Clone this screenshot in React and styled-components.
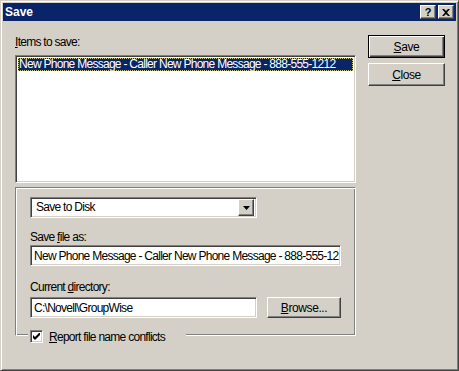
import React from 'react';
import styled, { createGlobalStyle } from 'styled-components';

const Global = createGlobalStyle`
  html, body { margin: 0; padding: 0; background: #d4d0c8; }
  body { font-family: "Liberation Sans", Arial, sans-serif; }
`;

const raised = `
  border: 1px solid;
  border-color: #ffffff #404040 #404040 #ffffff;
  box-shadow: inset -1px -1px #808080;
  background: #d4d0c8;
`;

const sunken = `
  border: 1px solid;
  border-color: #808080 #ffffff #ffffff #808080;
  box-shadow: inset 1px 1px #404040, inset -1px -1px #d4d0c8;
  background: #ffffff;
`;

const Window = styled.div`
  box-sizing: border-box;
  width: 459px;
  height: 371px;
  background: #d4d0c8;
  border: 1px solid;
  border-color: #d4d0c8 #404040 #404040 #d4d0c8;
  box-shadow: inset 1px 1px #ffffff, inset -1px -1px #808080;
  padding: 2px;
  display: flex;
  flex-direction: column;
  font-family: "Liberation Sans", Arial, sans-serif;
  font-size: 12px;
  letter-spacing: -0.72px;
  color: #000;
  u { text-decoration: underline; text-underline-offset: 1px; }
`;

const TitleBar = styled.div`
  height: 18px;
  flex: none;
  background: #0a246a;
  display: flex;
  align-items: center;
  padding: 0 2px;
`;

const TitleText = styled.div`
  flex: 1;
  color: #fff;
  font-weight: bold;
  font-size: 12px;
  letter-spacing: 0;
  line-height: 18px;
`;

const TitleButton = styled.div`
  box-sizing: border-box;
  width: 16px;
  height: 14px;
  margin-left: ${p => (p.$gap ? '2px' : '0')};
  ${raised}
  display: flex;
  align-items: center;
  justify-content: center;
  font-weight: bold;
  font-size: 11px;
  letter-spacing: 0;
  line-height: 12px;
`;

const Content = styled.div`
  display: flex;
  padding: 14px 0 0 12px;
`;

const LeftCol = styled.div`
  width: 341px;
  display: flex;
  flex-direction: column;
`;

const RightCol = styled.div`
  width: 77px;
  margin-left: 12px;
  display: flex;
  flex-direction: column;
  gap: 5px;
`;

const Label = styled.div`
  height: 14px;
  line-height: 14px;
  margin-top: ${p => p.$mt || 0}px;
  white-space: nowrap;
`;

const ListBox = styled.div`
  box-sizing: border-box;
  height: 128px;
  margin-top: 6px;
  ${sunken}
  padding: 2px;
`;

const ListRow = styled.div`
  height: 13px;
  line-height: 12px;
  background: #0a246a;
  color: #fff;
  outline: 1px dotted #c8c880;
  outline-offset: -1px;
  padding-left: 1px;
  white-space: nowrap;
  overflow: hidden;
`;

const GroupBox = styled.div`
  box-sizing: border-box;
  margin-top: 4px;
  border: 1px solid;
  border-color: #808080 #ffffff #ffffff #808080;
  box-shadow: inset 1px 1px #ffffff, inset -1px -1px #808080;
  padding: 9px 14px 0 14px;
  display: flex;
  flex-direction: column;
`;

const Combo = styled.div`
  box-sizing: border-box;
  width: 227px;
  height: 21px;
  ${sunken}
  padding: 2px;
  display: flex;
  align-items: center;
`;

const ComboText = styled.div`
  flex: 1;
  padding-left: 3px;
  line-height: 15px;
`;

const ComboArrow = styled.div`
  box-sizing: border-box;
  width: 16px;
  height: 17px;
  ${raised}
  display: flex;
  align-items: center;
  justify-content: center;
`;

const TextInput = styled.div`
  box-sizing: border-box;
  width: ${p => p.$w || '100%'};
  height: 21px;
  ${sunken}
  padding: 2px 3px;
  line-height: 17px;
  white-space: nowrap;
  overflow: hidden;
  margin-top: ${p => p.$mt || 0}px;
`;

const InputRow = styled.div`
  display: flex;
  margin-top: 3px;
  gap: 10px;
`;

const Button = styled.div`
  box-sizing: border-box;
  width: ${p => p.$w || '77px'};
  height: ${p => p.$h || '23px'};
  background: #d4d0c8;
  display: flex;
  align-items: center;
  justify-content: center;
  letter-spacing: -0.4px;
  ${p =>
    p.$default
      ? `
    border: 1px solid #000;
    box-shadow: inset 1px 1px #ffffff, inset -1px -1px #404040, inset -2px -2px #808080;
  `
      : `
    border: 1px solid;
    border-color: #ffffff #404040 #404040 #ffffff;
    box-shadow: inset -1px -1px #808080;
  `}
`;

const Footer = styled.div`
  display: flex;
  margin-top: 13px;
  margin-bottom: -9px;
`;

const Legend = styled.div`
  display: flex;
  align-items: flex-start;
  margin-left: -2px;
  padding: 0 21px 0 2px;
  background: #d4d0c8;
`;

const CheckBox = styled.div`
  box-sizing: border-box;
  width: 13px;
  height: 13px;
  margin-top: -1px;
  ${sunken}
  display: flex;
  align-items: center;
  justify-content: center;
`;

const CheckLabel = styled.div`
  margin-left: 6px;
  margin-top: -1px;
  line-height: 14px;
  white-space: nowrap;
`;

export default function App() {
  return (
    <>
      <Global />
      <Window>
        <TitleBar>
          <TitleText>Save</TitleText>
          <TitleButton>?</TitleButton>
          <TitleButton $gap>
            <svg width="8" height="7" viewBox="0 0 8 7">
              <path d="M0 0h2l2 2 2-2h2L5 3.5 8 7H6L4 5 2 7H0l3-3.5z" fill="#000" />
            </svg>
          </TitleButton>
        </TitleBar>
        <Content>
          <LeftCol>
            <Label><u>I</u>tems to save:</Label>
            <ListBox>
              <ListRow>New Phone Message - Caller New Phone Message - 888-555-1212</ListRow>
            </ListBox>
            <GroupBox>
              <Combo>
                <ComboText>Save to Disk</ComboText>
                <ComboArrow>
                  <svg width="7" height="4" viewBox="0 0 7 4">
                    <path d="M0 0h7L3.5 4z" fill="#000" />
                  </svg>
                </ComboArrow>
              </Combo>
              <Label $mt={12}>Save <u>f</u>ile as:</Label>
              <TextInput $mt={1}>New Phone Message - Caller New Phone Message - 888-555-12</TextInput>
              <Label $mt={14}>Current <u>d</u>irectory:</Label>
              <InputRow>
                <TextInput $w="227px">C:\Novell\GroupWise</TextInput>
                <Button $w="74px" $h="21px"><span><u>B</u>rowse...</span></Button>
              </InputRow>
              <Footer>
                <Legend>
                  <CheckBox>
                    <svg width="7" height="7" viewBox="0 0 7 7">
                      <path d="M0 2v3l2 2 5-5V-1L2 4z" fill="#000" />
                    </svg>
                  </CheckBox>
                  <CheckLabel><u>R</u>eport file name conflicts</CheckLabel>
                </Legend>
              </Footer>
            </GroupBox>
          </LeftCol>
          <RightCol>
            <Button $default><span><u>S</u>ave</span></Button>
            <Button><span><u>C</u>lose</span></Button>
          </RightCol>
        </Content>
      </Window>
    </>
  );
}
